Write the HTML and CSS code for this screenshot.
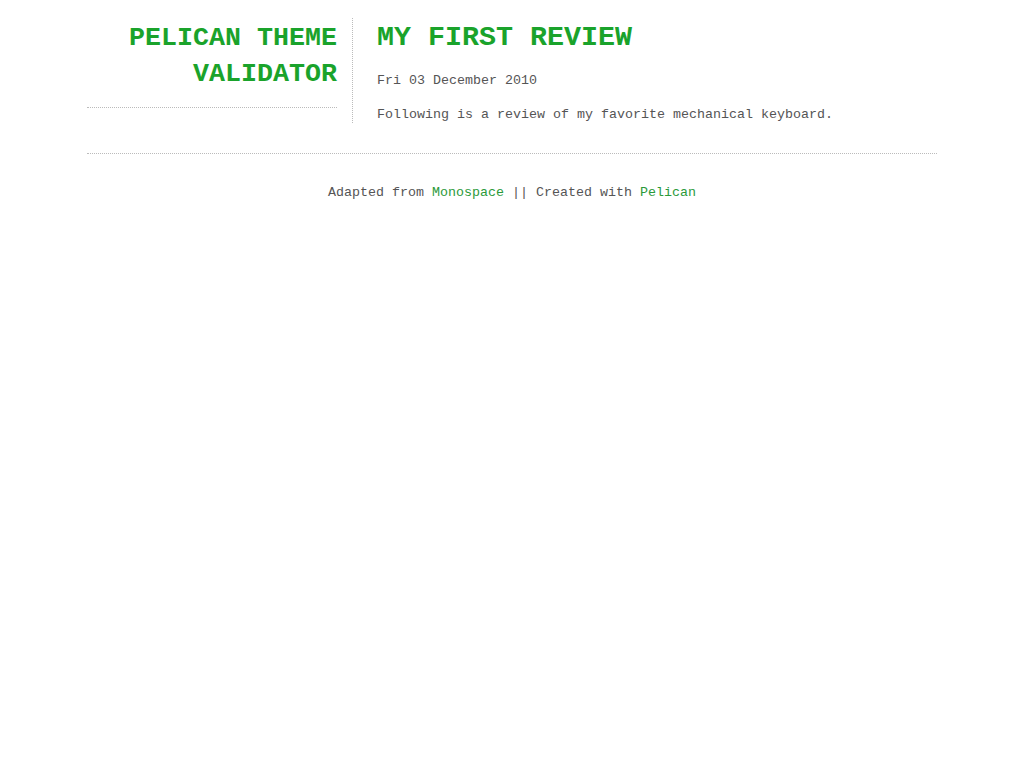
FILE: index.html
```html
<!DOCTYPE html>
<html>
<head>
<meta charset="utf-8">
<title>My first review</title>
<link rel="stylesheet" href="styles.css">
</head>
<body>
<div class="wrap">
  <div class="top">
    <aside class="side">
      <h1 class="site-title">PELICAN THEME VALIDATOR</h1>
    </aside>
    <main class="main">
      <h2 class="post-title">MY FIRST REVIEW</h2>
      <p class="date">Fri 03 December 2010</p>
      <p class="body-text">Following is a review of my favorite mechanical keyboard.</p>
    </main>
  </div>
  <footer class="footer">
    Adapted from <a href="#">Monospace</a> || Created with <a href="#">Pelican</a>
  </footer>
</div>
</body>
</html>
```

FILE: styles.css
```css
html, body {
  margin: 0;
  padding: 0;
  background: #fff;
}
body {
  font-family: "Liberation Mono", "Courier New", monospace;
  font-size: 13.33px;
  color: #555;
}
.wrap {
  width: 850px;
  margin: 0 auto;
  padding-top: 18px;
}
.top {
  display: flex;
  align-items: flex-start;
  border-bottom: 1px dotted #bbb;
  padding-bottom: 28px;
}
.side {
  width: 250px;
  padding-right: 15px;
  padding-bottom: 15px;
  border-right: 1px dotted #bbb;
}
.site-title {
  margin: 0;
  padding: 2px 0 15px;
  font-size: 26.67px;
  line-height: 36px;
  font-weight: bold;
  color: #1aa32b;
  text-align: right;
  border-bottom: 1px dotted #bbb;
}
.main {
  padding-left: 24px;
}
.post-title {
  margin: 0;
  padding-top: 2px;
  font-size: 28.33px;
  line-height: 36px;
  font-weight: bold;
  color: #1aa32b;
}
.date {
  margin: 15px 0 0;
  line-height: 20px;
}
.body-text {
  margin: 14px 0 0;
  line-height: 20px;
}
.footer {
  text-align: center;
  padding-top: 29px;
  line-height: 20px;
}
.footer a {
  color: #2a9a3a;
  text-decoration: none;
}
```
